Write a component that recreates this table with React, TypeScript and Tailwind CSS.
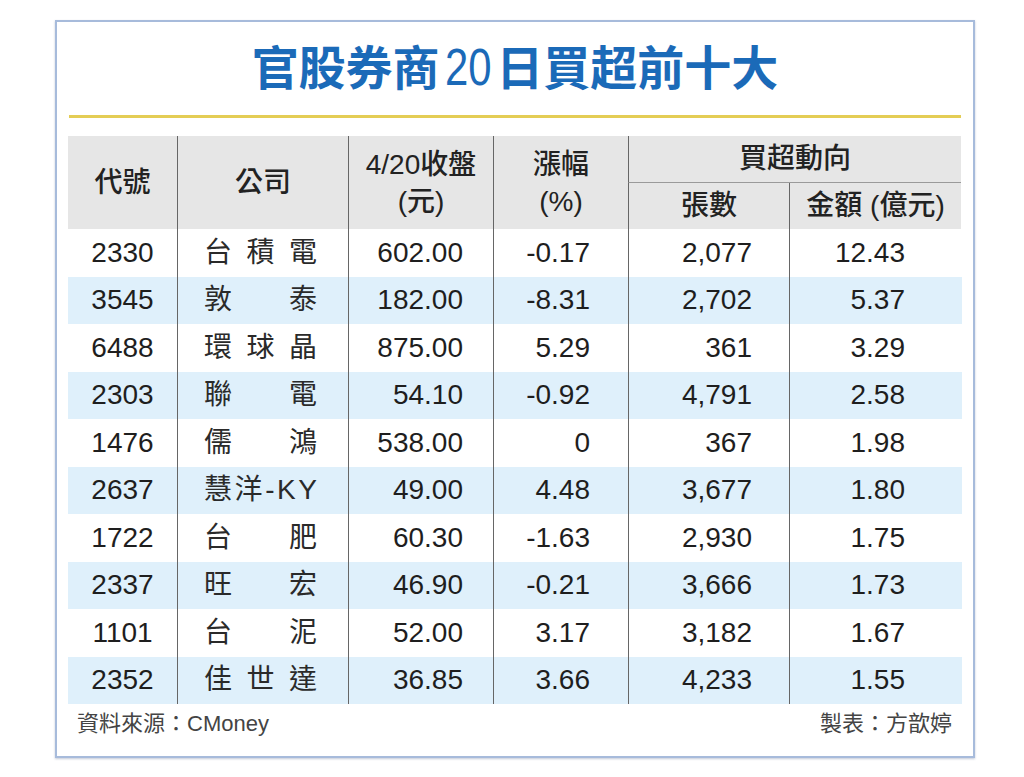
const FONT = '[font-family:"Liberation_Sans","Noto_Sans_CJK_TC",sans-serif]';

const rows = [
  ['2330', '台積電', '602.00', '-0.17', '2,077', '12.43'],
  ['3545', '敦泰', '182.00', '-8.31', '2,702', '5.37'],
  ['6488', '環球晶', '875.00', '5.29', '361', '3.29'],
  ['2303', '聯電', '54.10', '-0.92', '4,791', '2.58'],
  ['1476', '儒鴻', '538.00', '0', '367', '1.98'],
  ['2637', '慧洋-KY', '49.00', '4.48', '3,677', '1.80'],
  ['1722', '台肥', '60.30', '-1.63', '2,930', '1.75'],
  ['2337', '旺宏', '46.90', '-0.21', '3,666', '1.73'],
  ['1101', '台泥', '52.00', '3.17', '3,182', '1.67'],
  ['2352', '佳世達', '36.85', '3.66', '4,233', '1.55'],
];

const cols = 'grid grid-cols-[109px_171px_145px_135px_161px_172px]';

function HeaderRow() {
  const cell = 'flex flex-col items-center justify-center bg-[#e6e6e6] text-[28px] font-medium text-[#222] leading-[37px]';
  return (
    <div className={`${cols} grid-rows-[47px_46px]`}>
      <div className={`${cell} row-span-2`}>代號</div>
      <div className={`${cell} row-span-2 border-l border-[#666]`}>公司</div>
      <div className={`${cell} row-span-2 border-l border-[#666]`}>
        <span>4/20收盤</span>
        <span>(元)</span>
      </div>
      <div className={`${cell} row-span-2 border-l border-[#666]`}>
        <span>漲幅</span>
        <span>(%)</span>
      </div>
      <div className={`${cell} col-span-2 border-l border-b border-[#666] border-b-[#9a9a9a] leading-none`}>買超動向</div>
      <div className={`${cell} border-l border-[#666] leading-none`}>張數</div>
      <div className={`${cell} border-l border-[#666] leading-none`}>金額 (億元)</div>
    </div>
  );
}

function DataRow({ row, idx }: { row: string[]; idx: number }) {
  const [code, name, close, chg, lots, amount] = row;
  const bg = idx % 2 === 1 ? 'bg-[#dff0fb]' : 'bg-white';
  const cell = 'flex items-center h-[47.5px] text-[28px] leading-none text-[#1e1e1e] border-l border-[#666]';
  return (
    <div className={`${cols} ${bg}`}>
      <div className="flex items-center justify-center h-[47.5px] text-[28px] leading-none text-[#1e1e1e]">{code}</div>
      <div className={`${cell} justify-between pl-[26px] pr-[31px] text-[#2a2a2a]`}>
        {Array.from(name).map((ch, i) => (
          <span key={i}>{ch}</span>
        ))}
      </div>
      <div className={`${cell} justify-end pr-[30px]`}>{close}</div>
      <div className={`${cell} justify-end pr-[38px]`}>{chg}</div>
      <div className={`${cell} justify-end pr-[37px]`}>{lots}</div>
      <div className={`${cell} justify-end pr-[56px]`}>{amount}</div>
    </div>
  );
}

export default function App() {
  return (
    <div className={`min-h-screen bg-white pt-[20px] pl-[55px] ${FONT}`}>
      <div className="w-[920px] h-[738px] border-2 border-[#a7bbdb] shadow-[0_1px_2px_rgba(80,100,140,0.35)] flex flex-col px-[11px]">
        {/* title shares one baseline so the digits sit with the ideographs */}
        <div className="h-[93px] leading-[93px] text-center text-[47px] font-bold text-[#1b6ab8] whitespace-nowrap">
          <span className='leading-none [font-family:"Noto_Sans_CJK_TC",sans-serif]'>官股券商</span>
          <span className="inline-block leading-none font-normal text-[51px] scale-x-[0.82]">20</span>
          <span className='leading-none [font-family:"Noto_Sans_CJK_TC",sans-serif]'>日買超前十大</span>
        </div>
        <div className="h-[3px] bg-[#e4cd55] mx-[1px]" />
        <div className="h-[18px]" />
        <HeaderRow />
        {rows.map((r, i) => (
          <DataRow key={r[0]} row={r} idx={i} />
        ))}
        <div className="flex justify-between items-center h-[40px] pl-[9px] pr-[10px] text-[22px] leading-none text-[#444]">
          <span>資料來源：CMoney</span>
          <span>製表：方歆婷</span>
        </div>
      </div>
    </div>
  );
}
